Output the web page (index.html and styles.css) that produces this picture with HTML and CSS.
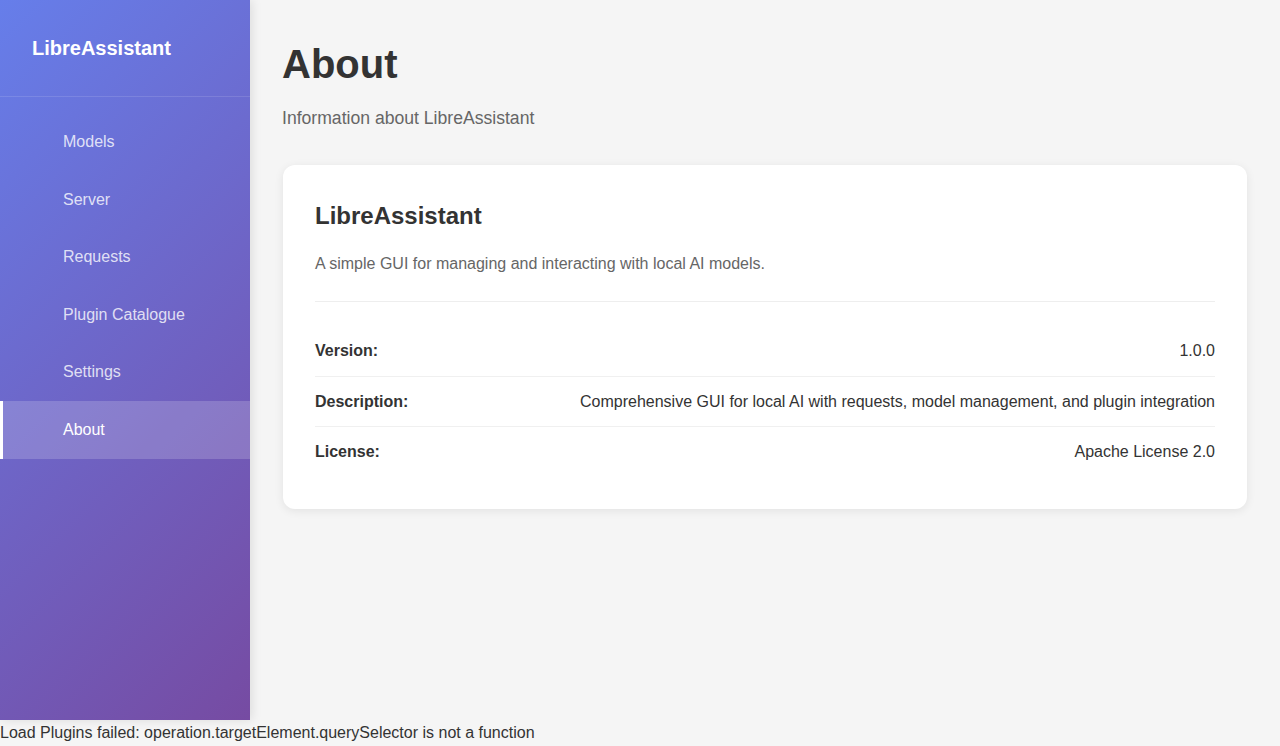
FILE: index.html
```html
<!DOCTYPE html>
<html lang="en">
<head>
<meta charset="utf-8">
<title>LibreAssistant</title>
<link rel="stylesheet" href="styles.css">
</head>
<body>
<div class="app">
  <aside class="sidebar">
    <div class="brand">LibreAssistant</div>
    <nav class="nav">
      <a class="nav-item">Models</a>
      <a class="nav-item">Server</a>
      <a class="nav-item">Requests</a>
      <a class="nav-item">Plugin Catalogue</a>
      <a class="nav-item">Settings</a>
      <a class="nav-item active">About</a>
    </nav>
  </aside>
  <main class="main">
    <h1 class="page-title">About</h1>
    <p class="page-subtitle">Information about LibreAssistant</p>
    <section class="card">
      <div class="card-head">
        <h2 class="card-title">LibreAssistant</h2>
        <p class="card-desc">A simple GUI for managing and interacting with local AI models.</p>
      </div>
      <div class="info">
        <div class="info-row"><span class="info-label">Version:</span><span class="info-value">1.0.0</span></div>
        <div class="info-row"><span class="info-label">Description:</span><span class="info-value">Comprehensive GUI for local AI with requests, model management, and plugin integration</span></div>
        <div class="info-row"><span class="info-label">License:</span><span class="info-value">Apache License 2.0</span></div>
      </div>
    </section>
  </main>
</div>
<div class="error">Load Plugins failed: operation.targetElement.querySelector is not a function</div>
</body>
</html>
```
FILE: styles.css
```css
* { box-sizing: border-box; }
html, body { margin: 0; padding: 0; }
body {
  font-family: "Liberation Sans", Arial, sans-serif;
  background: #f5f5f5;
  color: #333;
  overflow: hidden;
}
.app {
  display: flex;
  height: 720px;
}
.sidebar {
  width: 250px;
  flex-shrink: 0;
  background: linear-gradient(135deg, #667eea 0%, #764ba2 100%);
  box-shadow: 2px 0 10px rgba(0, 0, 0, 0.1);
  color: #fff;
  position: relative;
  z-index: 1;
}
.brand {
  padding: 32px;
  font-size: 20px;
  font-weight: bold;
  line-height: 32px;
  border-bottom: 1px solid rgba(255, 255, 255, 0.12);
}
.nav {
  display: flex;
  flex-direction: column;
  padding-top: 16px;
}
.nav-item {
  display: block;
  padding: 16px 20px 16px 60px;
  border-left: 3px solid transparent;
  font-size: 16px;
  line-height: 25.6px;
  color: rgba(255, 255, 255, 0.8);
}
.nav-item.active {
  background: rgba(255, 255, 255, 0.18);
  border-left-color: #fff;
  color: #fff;
}
.main {
  flex: 1;
  padding: 40px 33px 32px 32px;
}
.page-title {
  margin: 0 0 16px;
  font-size: 40px;
  line-height: 48px;
  font-weight: bold;
  color: #333;
}
.page-subtitle {
  margin: 0 0 33px;
  font-size: 17.6px;
  line-height: 28px;
  color: #666;
}
.card {
  margin-left: 1px;
  background: #fff;
  border-radius: 12px;
  box-shadow: 0 2px 10px rgba(0, 0, 0, 0.08);
  padding: 32px;
}
.card-head {
  padding-bottom: 24px;
  border-bottom: 1px solid #eee;
}
.card-title {
  margin: 0 0 16px;
  font-size: 24px;
  line-height: 38.4px;
  font-weight: bold;
  color: #333;
}
.card-desc {
  margin: 0;
  font-size: 16px;
  line-height: 25.6px;
  color: #666;
}
.info {
  margin-top: 24px;
}
.info-row {
  display: flex;
  justify-content: space-between;
  align-items: center;
  padding: 12px 0;
  border-bottom: 1px solid #f0f0f0;
  font-size: 16px;
  line-height: 25.6px;
}
.info-row:last-child { border-bottom: none; }
.info-label { font-weight: bold; color: #333; }
.info-value { color: #333; text-align: right; }
.error {
  font-size: 16px;
  line-height: 25.6px;
  color: #333;
}
```
